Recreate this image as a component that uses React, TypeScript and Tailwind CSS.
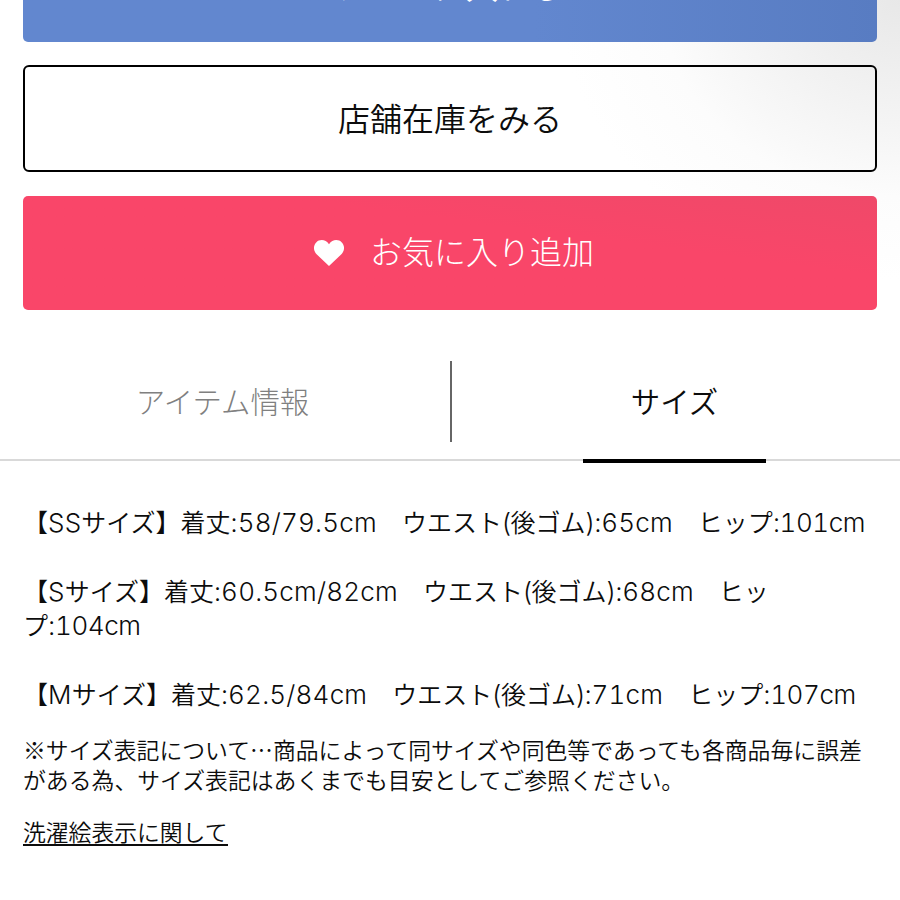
import React from "react";

function Latin({ children }: { children: React.ReactNode }) {
  return (
    <span className="font-['Inter','Liberation_Sans',sans-serif] text-[26px] leading-none font-light tracking-[0.2px] tabular-nums">
      {children}
    </span>
  );
}

// punctuation keeps its proportional width
function Mark({ children }: { children: React.ReactNode }) {
  return (
    <span className="font-['Inter','Liberation_Sans',sans-serif] text-[26px] leading-none font-light tracking-[-0.4px]">
      {children}
    </span>
  );
}

function Hip({ children }: { children: React.ReactNode }) {
  return (
    <span className="font-['Inter','Liberation_Sans',sans-serif] text-[26px] leading-none font-light tracking-[-0.4px] tabular-nums">
      {children}
    </span>
  );
}

function HeartIcon() {
  return (
    <svg viewBox="0 0 30 26" className="h-[26px] w-[30px]" fill="#fff" aria-hidden="true">
      <path d="M15 26 2.6 14.2C-.9 10.700-.8 5.300 2.200 2.400 5.500-.9 11.600-.9 15 4.200 18.400-.9 24.500-.9 27.800 2.400 30.800 5.300 30.900 10.700 27.400 14.200Z" />
    </svg>
  );
}

export default function App() {
  return (
    <main
      lang="ja"
      className="h-[900px] w-[900px] overflow-hidden bg-white bg-[radial-gradient(ellipse_340px_280px_at_100%_0%,#e8e8e8_0%,#f3f3f3_40%,#fcfcfc_70%,#ffffff_100%)] font-['Noto_Sans_CJK_JP',sans-serif] font-[350] text-[#0c0c0c]"
    >
      <div className="-mt-[72px] flex flex-col px-[23px]">
        <button className="flex h-[114px] items-center justify-center rounded-[5px] bg-linear-to-r from-[#6287cf] from-60% to-[#587cc2] pb-px text-[32px] leading-none text-white">
          カートに入れる
        </button>
        <button className="mt-[23px] flex h-[107px] items-center justify-center rounded-[6px] border-2 border-black pb-1 text-[32px] leading-none">
          店舗在庫をみる
        </button>
        <button className="mt-6 flex h-[114px] items-center justify-center gap-[26px] rounded-[5px] bg-linear-to-bl from-[#ef4969] to-[#f94669] to-35% pl-2 text-[32px] leading-none font-light text-white">
          <HeartIcon />
          <span className="pb-1.5">お気に入り追加</span>
        </button>
      </div>

      <nav className="mt-[51px] flex h-[100px] border-b-2 border-[#d9d9d9] text-[29.4px] leading-none">
        <button className="flex h-[81px] w-[450px] items-center justify-center pr-[5px] pb-0.5 font-light text-[#808080]">
          アイテム情報
        </button>
        <div className="h-[81px] w-[2px] bg-[#666]" />
        <div className="flex flex-1 flex-col items-center pr-[3px]">
          <button className="flex h-[81px] items-center justify-center pb-0.5">サイズ</button>
          <div className="relative top-[17px] h-1 w-[183px] shrink-0 bg-black" />
        </div>
      </nav>

      <section className="px-[23px] pt-[43px]">
        <div className="text-[25px] leading-[34.4px] whitespace-nowrap">
          <p>
            【<Latin>SS</Latin>サイズ】着丈<Latin>:58/79.5cm</Latin>　ウエスト<Mark>(</Mark>後ゴム
            <Mark>):</Mark><Latin>65cm</Latin>　ヒップ<Hip>:101cm</Hip>
          </p>
          <p className="mt-[34.4px]">
            【<Latin>S</Latin>サイズ】着丈<Latin>:60.5cm/82cm</Latin>　ウエスト<Mark>(</Mark>後ゴム
            <Mark>):</Mark><Latin>68cm</Latin>　ヒッ
            <br />
            プ<Mark>:</Mark><Hip>104cm</Hip>
          </p>
          <p className="mt-[34.4px]">
            【<Latin>M</Latin>サイズ】着丈<Latin>:62.5/84cm</Latin>　ウエスト<Mark>(</Mark>後ゴム
            <Mark>):</Mark><Latin>71cm</Latin>　ヒップ<Mark>:</Mark><Hip>107cm</Hip>
          </p>
        </div>
        <p className="mt-6 text-[22.85px] leading-[30px] whitespace-nowrap">
          ※サイズ表記について…商品によって同サイズや同色等であっても各商品毎に誤差
          <br />
          がある為、サイズ表記はあくまでも目安としてご参照ください。
        </p>
        <a
          href="#"
          className="mt-[25px] inline-block border-b-2 border-[#0c0c0c] text-[22.8px] leading-[25px]"
        >
          洗濯絵表示に関して
        </a>
      </section>
    </main>
  );
}
